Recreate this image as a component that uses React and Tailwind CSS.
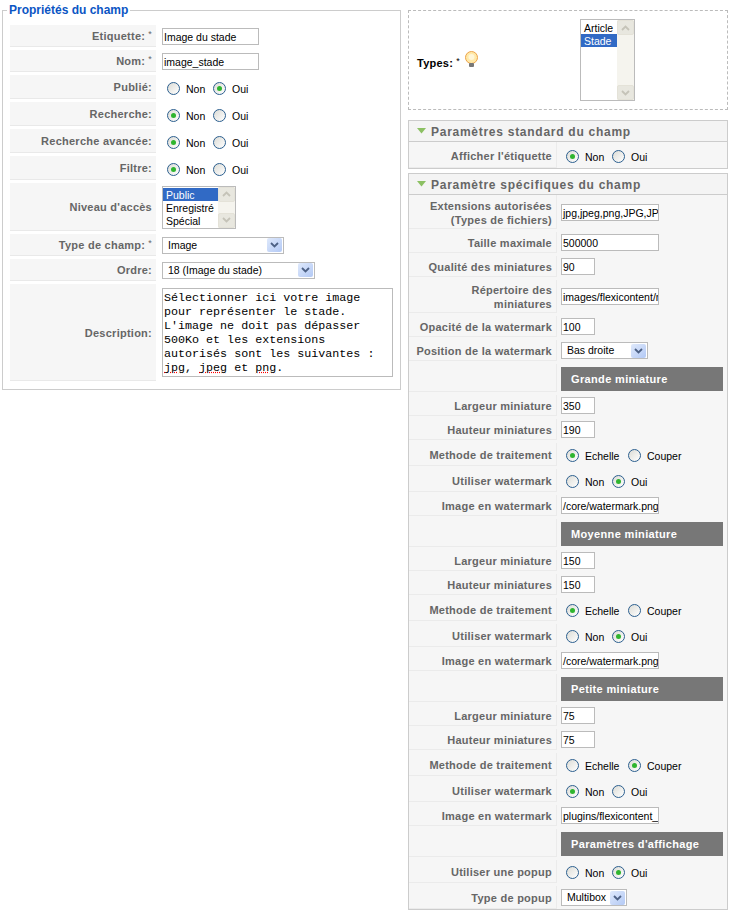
const labelFont = "font-['Liberation_Sans',sans-serif]"

function Radio({ checked }) {
  return (
    <span className="relative inline-block w-[13px] h-[13px] rounded-full border border-[#2c5f8f] bg-gradient-to-br from-[#dcdcd6] to-white shrink-0">
      {checked && <span className="absolute left-[3px] top-[3px] w-[5px] h-[5px] rounded-full bg-[#2fb52f]" />}
    </span>
  )
}

function RadioPair({ value, first = 'Non', second = 'Oui', firstWidth = 'w-[27px]' }) {
  return (
    <div className="flex items-center text-[10.5px] text-black pl-[5px] mt-[2px]">
      <Radio checked={value === 0} />
      <span className={`ml-[6px] mt-[3px] ${firstWidth}`}>{first}</span>
      <Radio checked={value === 1} />
      <span className="ml-[6px] mt-[3px]">{second}</span>
    </div>
  )
}

function TextInput({ value, width }) {
  return (
    <div className={`h-[17px] ${width} border border-[#bbbbbb] bg-white text-[10.5px] leading-[15px] pt-[1px] text-black pl-[1px] overflow-hidden whitespace-nowrap`}>
      {value}
    </div>
  )
}

function Chevron({ up }) {
  return (
    <svg width="9" height="6" viewBox="0 0 9 6" className={up ? 'rotate-180' : ''}>
      <path d="M1 1 L4.5 4.5 L8 1" fill="none" stroke="currentColor" strokeWidth="1.8" />
    </svg>
  )
}

function Select({ value, width }) {
  return (
    <div className={`h-[17px] ${width} border border-[#bbbbbb] bg-white flex items-center justify-between text-[10.5px] text-black pl-[5px] pr-[1px]`}>
      <span className="mt-[1px]">{value}</span>
      <span className="w-[15px] h-[14px] rounded-[2px] bg-gradient-to-br from-[#dfe9fb] to-[#b3c9f5] flex items-center justify-center text-[#4d6185]">
        <Chevron />
      </span>
    </div>
  )
}

function ListBox({ items, selected, width, height }) {
  return (
    <div className={`flex ${width} ${height} border border-[#bbbbbb] bg-white text-[10.5px] text-black`}>
      <div className="flex-1 min-w-0 pt-[1px]">
        {items.map((item, i) => (
          <div key={item} className={`h-[13px] leading-[14px] pl-[3px] ${i === selected ? 'bg-[#316ac5] text-white' : ''}`}>{item}</div>
        ))}
      </div>
      <div className="w-[17px] bg-[#f5f4ee] flex flex-col justify-between">
        <span className="h-[15px] border border-[#e4e2d8] rounded-[2px] bg-[#e8e7df] flex items-center justify-center text-[#c5c3b8]"><Chevron up /></span>
        <span className="h-[15px] border border-[#e4e2d8] rounded-[2px] bg-[#e8e7df] flex items-center justify-center text-[#c5c3b8]"><Chevron /></span>
      </div>
    </div>
  )
}

function Required() {
  return <span className="font-normal text-[9px] align-top ml-[3px]">*</span>
}

function LeftRow({ label, req, height, children }) {
  return (
    <div className={`flex ${height} mb-[3px]`}>
      <div className={`w-[146px] shrink-0 bg-[#f6f6f6] border-b border-[#e9e9e9] flex items-center justify-end text-right pr-[4px] text-[11px] font-bold text-[#666666] ${labelFont} tracking-[0.25px]`}>
        <span className="mt-[2px]">{label}{req && <Required />}</span>
      </div>
      <div className="pl-[6px] flex items-center">{children}</div>
    </div>
  )
}

function RightRow({ label, height, children }) {
  return (
    <div className={`flex ${height} mb-[3px] last:mb-0`}>
      <div className={`w-[148px] shrink-0 bg-[#f6f6f6] border-b border-r border-[#ebebeb] flex items-center justify-end text-right pr-[4px] text-[11px] leading-[14px] font-bold text-[#666666] ${labelFont} tracking-[0.25px]`}>
        <span className="mt-[2px]">{label}</span>
      </div>
      <div className="pl-[4px] flex items-center flex-1 bg-[#f6f6f6]">{children}</div>
    </div>
  )
}

function SectionHeading({ title }) {
  return (
    <div className="flex h-[28px] mb-[3px]">
      <div className="w-[148px] shrink-0 bg-[#f6f6f6] border-b border-r border-[#ebebeb]" />
      <div className="pl-[4px] flex-1 bg-[#f6f6f6] pr-[4px] flex items-start pt-[3px]">
        <div className={`w-full h-[24px] bg-[#777777] text-white text-[11px] font-bold leading-[25px] pl-[10px] ${labelFont} tracking-[0.35px]`}>{title}</div>
      </div>
    </div>
  )
}

function PanelHeader({ title }) {
  return (
    <div className="h-[21px] bg-[#f4f4f4] border-b border-[#cccccc] flex items-center pl-[8px]">
      <svg width="10" height="6" viewBox="0 0 10 6"><path d="M0 0 H9 L4.5 5.5 Z" fill="#8cc063" /></svg>
      <span className={`ml-[4px] mt-[1px] text-[12px] font-bold text-[#666666] ${labelFont} tracking-[0.73px]`}>{title}</span>
    </div>
  )
}

function Thumbnails({ title, width, height, method, watermark, file }) {
  return (
    <>
      <SectionHeading title={title} />
      <RightRow label="Largeur miniature" height="h-[21px]"><TextInput value={width} width="w-[34px]" /></RightRow>
      <RightRow label="Hauteur miniatures" height="h-[21px]"><TextInput value={height} width="w-[34px]" /></RightRow>
      <RightRow label="Methode de traitement" height="h-[23px]"><RadioPair value={method} first="Echelle" second="Couper" firstWidth="w-[43px]" /></RightRow>
      <RightRow label="Utiliser watermark" height="h-[23px]"><RadioPair value={watermark} /></RightRow>
      <RightRow label="Image en watermark" height="h-[21px]"><TextInput value={file} width="w-[98px]" /></RightRow>
    </>
  )
}

export default function App() {
  return (
    <div className="w-[735px] h-[913px] bg-white flex items-start font-['Liberation_Sans',sans-serif] overflow-hidden">
      <fieldset className="ml-[2px] mt-[3px] w-[399px] h-[387px] border border-[#cccccc] pl-[7px] pr-[7px] shrink-0">
        <legend className={`ml-[-3px] px-[2px] text-[12px] font-bold text-[#0b55c4] ${labelFont} leading-[14px]`}>Propriétés du champ</legend>
        <div className="mt-[8px]">
          <LeftRow label="Etiquette:" req height="h-[22px]"><TextInput value="Image du stade" width="w-[97px]" /></LeftRow>
          <LeftRow label="Nom:" req height="h-[22px]"><TextInput value="image_stade" width="w-[97px]" /></LeftRow>
          <LeftRow label="Publié:" height="h-[24px]"><RadioPair value={1} /></LeftRow>
          <LeftRow label="Recherche:" height="h-[24px]"><RadioPair value={0} /></LeftRow>
          <LeftRow label="Recherche avancée:" height="h-[24px]"><RadioPair value={0} /></LeftRow>
          <LeftRow label="Filtre:" height="h-[24px]"><RadioPair value={0} /></LeftRow>
          <LeftRow label="Niveau d'accès" height="h-[48px]">
            <ListBox items={['Public', 'Enregistré', 'Spécial']} selected={0} width="w-[74px]" height="h-[43px]" />
          </LeftRow>
          <LeftRow label="Type de champ:" req height="h-[22px]"><Select value="Image" width="w-[122px]" /></LeftRow>
          <LeftRow label="Ordre:" height="h-[22px]"><Select value="18 (Image du stade)" width="w-[153px]" /></LeftRow>
          <LeftRow label="Description:" height="h-[97px]">
            <div className="w-[231px] h-[89px] border border-[#bbbbbb] bg-white font-['Liberation_Mono',monospace] text-[11.7px] leading-[14px] text-black pl-[1px] pt-[2px] whitespace-pre-line">
              {'Sélectionner ici votre image\npour représenter le stade.\nL\'image ne doit pas dépasser\n500Ko et les extensions\nautorisés sont les suivantes :\n'}
              <span className="underline decoration-dotted decoration-[#ff0000]">jpg</span>, <span className="underline decoration-dotted decoration-[#ff0000]">jpeg</span> et <span className="underline decoration-dotted decoration-[#ff0000]">png</span>.
            </div>
          </LeftRow>
        </div>
      </fieldset>

      <div className="ml-[7px] mt-[10px] w-[320px] shrink-0">
        <div className="h-[100px] border border-dashed border-[#bbbbbb] flex relative">
          <div className={`w-[171px] shrink-0 flex items-center pl-[8px] pt-[4px] text-[11px] font-bold text-black ${labelFont} tracking-[0.25px]`}>
            <span className="mt-[2px]">Types:<Required /></span>
            <svg width="15" height="17" viewBox="0 0 15 17" className="ml-[4px] mb-[6px]">
              <circle cx="7.5" cy="6.5" r="6" fill="#ffe9a8" stroke="#eda34a" />
              <circle cx="7.5" cy="6" r="3" fill="#fff6d8" />
              <rect x="5" y="12" width="5" height="4" rx="1" fill="#777777" />
            </svg>
          </div>
          <div className="pt-[8px]">
            <ListBox items={['Article', 'Stade']} selected={1} width="w-[55px]" height="h-[82px]" />
          </div>
        </div>

        <div className="mt-[10px] border border-[#cccccc] bg-[#f6f6f6]">
          <PanelHeader title="Paramètres standard du champ" />
          <RightRow label="Afficher l'étiquette" height="h-[26px]">
            <RadioPair value={0} />
          </RightRow>
        </div>

        <div className="mt-[4px] border border-[#cccccc] bg-[#f6f6f6]">
          <PanelHeader title="Paramètre spécifiques du champ" />
          <RightRow label={<>Extensions autorisées<br />(Types de fichiers)</>} height="h-[34px]"><TextInput value="jpg,jpeg,png,JPG,JP" width="w-[98px]" /></RightRow>
          <RightRow label="Taille maximale" height="h-[21px]"><TextInput value="500000" width="w-[98px]" /></RightRow>
          <RightRow label="Qualité des miniatures" height="h-[21px]"><TextInput value="90" width="w-[34px]" /></RightRow>
          <RightRow label={<>Répertoire des<br />miniatures</>} height="h-[33px]"><TextInput value="images/flexicontent/r" width="w-[98px]" /></RightRow>
          <RightRow label="Opacité de la watermark" height="h-[21px]"><TextInput value="100" width="w-[34px]" /></RightRow>
          <RightRow label="Position de la watermark" height="h-[21px]"><Select value="Bas droite" width="w-[87px]" /></RightRow>
          <Thumbnails title="Grande miniature" width="350" height="190" method={0} watermark={1} file="/core/watermark.png" />
          <Thumbnails title="Moyenne miniature" width="150" height="150" method={0} watermark={1} file="/core/watermark.png" />
          <Thumbnails title="Petite miniature" width="75" height="75" method={1} watermark={0} file="plugins/flexicontent_" />
          <SectionHeading title="Paramètres d'affichage" />
          <RightRow label="Utiliser une popup" height="h-[23px]"><RadioPair value={1} /></RightRow>
          <RightRow label="Type de popup" height="h-[23px]"><Select value="Multibox" width="w-[66px]" /></RightRow>
        </div>
      </div>
    </div>
  )
}
